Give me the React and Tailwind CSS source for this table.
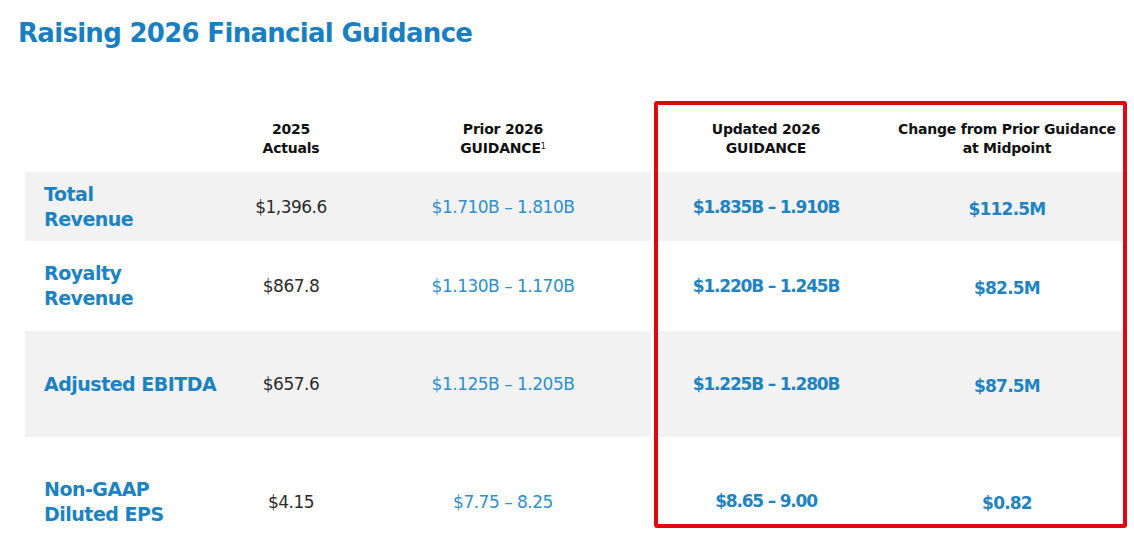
const rows = [
  { label: ['Total', 'Revenue'], actual: '$1,396.6', prior: '$1.710B – 1.810B', updated: '$1.835B – 1.910B', change: '$112.5M', h: 'h-[69px]', bg: 'bg-[#f2f2f2]' },
  { label: ['Royalty', 'Revenue'], actual: '$867.8', prior: '$1.130B – 1.170B', updated: '$1.220B – 1.245B', change: '$82.5M', h: 'h-[90px]', bg: 'bg-white' },
  { label: ['Adjusted EBITDA'], actual: '$657.6', prior: '$1.125B – 1.205B', updated: '$1.225B – 1.280B', change: '$87.5M', h: 'h-[106px]', bg: 'bg-[#f2f2f2]' },
  { label: ['Non-GAAP', 'Diluted EPS'], actual: '$4.15', prior: '$7.75 – 8.25', updated: '$8.65 – 9.00', change: '$0.82', h: 'h-[87px] pt-[40px]', bg: 'bg-white' },
];

const font = { fontFamily: '"DejaVu Sans", sans-serif' };

function HeadCell({ lines, sup }) {
  return (
    <div className="flex flex-col items-center justify-center text-[14px] leading-[19px] font-bold text-[#111] tracking-[-0.2px]">
      {lines.map((l, i) => (
        <span key={i}>
          {l}
          {sup && i === lines.length - 1 && <sup className="text-[8px] font-normal">1</sup>}
        </span>
      ))}
    </div>
  );
}

export default function App() {
  return (
    <div className="w-[1134px] h-[536px] bg-white overflow-hidden" style={font}>
      <h1 className="pl-[18px] pt-[15px] text-[26px] leading-[36px] font-bold text-[#1a7fc1] tracking-[-0.7px]">
        Raising 2026 Financial Guidance
      </h1>

      <div className="flex items-start mt-[50px] pl-[25px]">
        {/* left part: label, actuals, prior guidance */}
        <div className="w-[626px] pt-[4px]">
          <div className="grid grid-cols-[180px_172px_252px] h-[67px] items-center">
            <div />
            <HeadCell lines={['2025', 'Actuals']} />
            <HeadCell lines={['Prior 2026', 'GUIDANCE']} sup />
          </div>
          {rows.map((r, i) => (
            <div key={i} className={`grid grid-cols-[180px_172px_252px] items-center ${r.h} ${r.bg}`}>
              <div className="pl-[19px] whitespace-nowrap text-[19px] leading-[25px] font-bold text-[#1b82c4] tracking-[-0.5px]">
                {r.label.map((l, j) => <div key={j}>{l}</div>)}
              </div>
              <div className="pt-[2px] text-center text-[17px] text-[#2b2b2b] tracking-[-0.5px]">{r.actual}</div>
              <div className="pt-[2px] text-center text-[17px] text-[#2e90cc] tracking-[-0.5px]">{r.prior}</div>
            </div>
          ))}
        </div>

        {/* highlighted updated guidance */}
        <div className="ml-[3px] w-[473px] border-4 border-[#e2060f] rounded-[3px]">
          <div className="grid grid-cols-[216px_1fr] h-[67px] items-center">
            <HeadCell lines={['Updated 2026', 'GUIDANCE']} />
            <div className="pl-[17px]">
              <HeadCell lines={['Change from Prior Guidance', 'at Midpoint']} />
            </div>
          </div>
          {rows.map((r, i) => (
            <div key={i} className={`grid grid-cols-[216px_1fr] items-center ${r.h} ${r.bg}`}>
              <div className="pt-[2px] text-center text-[17px] font-bold text-[#1f83c2] tracking-[-1.2px]">{r.updated}</div>
              <div className="pl-[17px] pt-[6px] text-center text-[17px] font-bold text-[#1f83c2] tracking-[-0.8px]">{r.change}</div>
            </div>
          ))}
        </div>
      </div>
    </div>
  );
}
